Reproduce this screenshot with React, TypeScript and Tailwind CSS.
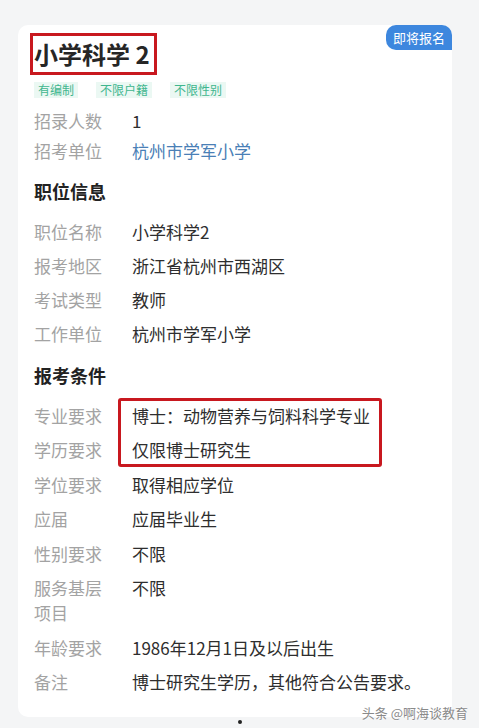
import React from "react"

const font = { fontFamily: '"Noto Sans CJK SC", "Noto Sans", sans-serif' }

function Row({ label, value, blue }: { label: React.ReactNode; value: string; blue?: boolean }) {
  return (
    <div className="flex text-[17px] leading-[25px]">
      <div className="w-[98px] shrink-0 text-[#a3a3a3]">{label}</div>
      <div className={blue ? "text-[#4a7fb6]" : "text-[#2e2e2e]"}>{value}</div>
    </div>
  )
}

function Heading({ children }: { children: string }) {
  return <div className="text-[18px] leading-[25px] font-bold text-[#222]">{children}</div>
}

export default function App() {
  return (
    <div className="relative w-[479px] h-[728px] overflow-hidden bg-[#f4f5f6]" style={font}>
      <div className="pt-[25px] pl-[18px]">
        <div className="relative w-[434px] h-[692px] bg-white rounded-[10px] pl-[12px] pt-[8px]">
          {/* status badge */}
          <div className="absolute right-0 top-0 h-[25px] px-[7px] bg-[#3d87de] text-white text-[13px] leading-[25px] rounded-tl-[10px] rounded-bl-[10px] rounded-tr-[10px]">
            即将报名
          </div>

          <div className="inline-block border-[3px] border-[#c8181f] pl-[1px] pr-[4px] h-[42px]">
            <div className="text-[24px] leading-[36px] font-semibold text-[#262626]">小学科学 2</div>
          </div>

          <div className="flex gap-[18px] mt-[7px] ml-[4px]">
            {["有编制", "不限户籍", "不限性别"].map((t) => (
              <span key={t} className="px-[4px] h-[16px] text-[12px] leading-[16px] bg-[#ebf8f3] text-[#3fb68e]">
                {t}
              </span>
            ))}
          </div>

          <div className="ml-[4px]">
            <div className="flex flex-col gap-[5px] mt-[9.5px]">
              <Row label="招录人数" value="1" />
              <Row label="招考单位" value="杭州市学军小学" blue />
            </div>

            <div className="mt-[16px]">
              <Heading>职位信息</Heading>
            </div>
            <div className="flex flex-col gap-[9px] mt-[15px]">
              <Row label="职位名称" value="小学科学2" />
              <Row label="报考地区" value="浙江省杭州市西湖区" />
              <Row label="考试类型" value="教师" />
              <Row label="工作单位" value="杭州市学军小学" />
            </div>

            <div className="mt-[17px]">
              <Heading>报考条件</Heading>
            </div>
            <div className="flex flex-col gap-[9.5px] mt-[15px]">
              <div className="relative flex flex-col gap-[9.5px]">
                <Row label="专业要求" value="博士：动物营养与饲料科学专业" />
                <Row label="学历要求" value="仅限博士研究生" />
                <div className="absolute left-[84px] top-[-4.5px] w-[264px] h-[69px] border-[3px] border-[#c8181f] rounded-[3px]" />
              </div>
              <Row label="学位要求" value="取得相应学位" />
              <Row label="应届" value="应届毕业生" />
              <Row label="性别要求" value="不限" />
              <Row
                label={
                  <>
                    服务基层
                    <br />
                    项目
                  </>
                }
                value="不限"
              />
              <Row label="年龄要求" value="1986年12月1日及以后出生" />
              <Row label="备注" value="博士研究生学历，其他符合公告要求。" />
            </div>
          </div>
        </div>
      </div>

      {/* watermark + pager dot */}
      <div
        className="absolute right-[11px] top-[704px] text-[13px] leading-[18px] text-[#8a8a8a]"
        style={{ textShadow: "0 0 2px #fff, 0 0 2px #fff" }}
      >
        头条 @啊海谈教育
      </div>
      <div className="absolute left-[238px] top-[720px] w-[4px] h-[4px] rounded-full bg-[#222]" />
    </div>
  )
}
